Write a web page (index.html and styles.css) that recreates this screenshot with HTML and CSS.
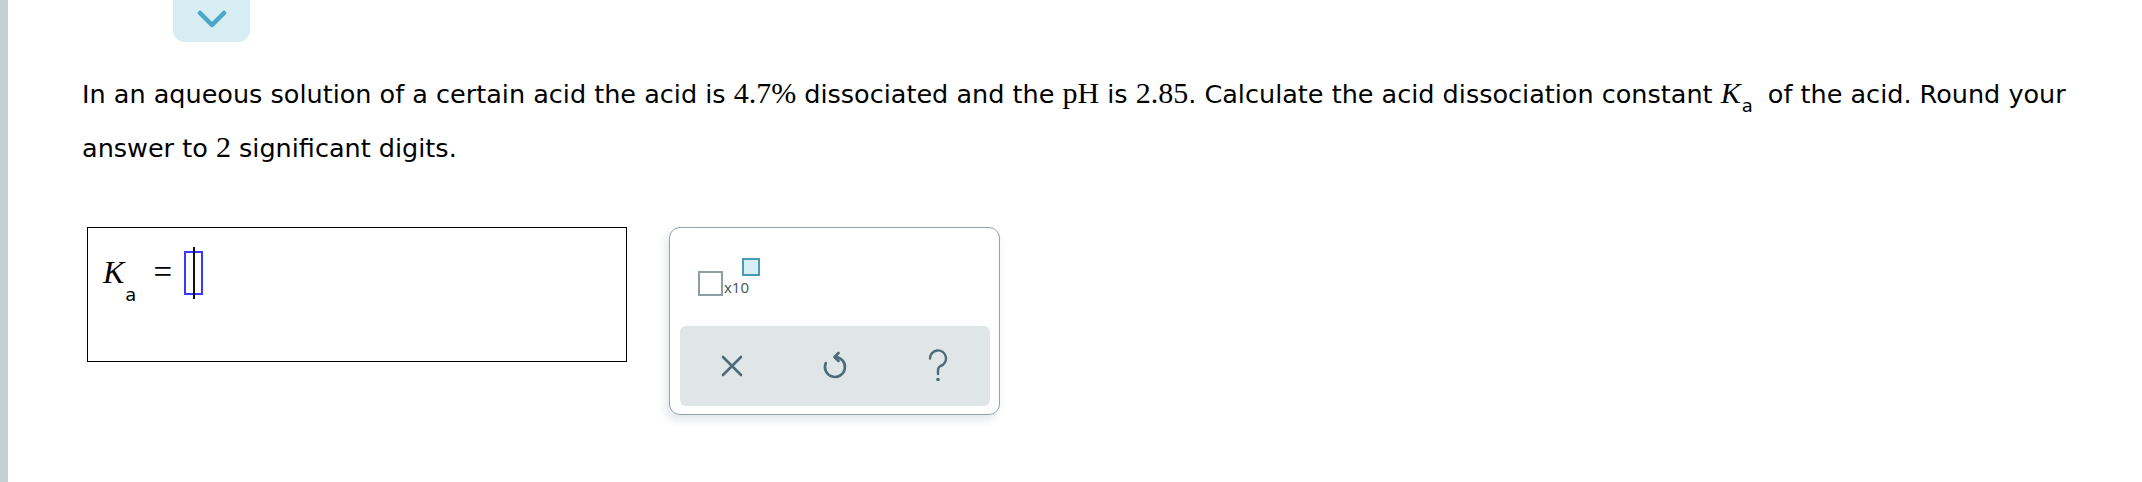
FILE: index.html
```html
<!DOCTYPE html>
<html lang="en">
<head>
  <meta charset="UTF-8">
  <title>Acid dissociation constant</title>
  <link rel="stylesheet" href="styles.css">
</head>
<body>
  <div class="edge"></div>
  <div class="page">
    <div class="tab-row">
      <button class="collapse" aria-label="Collapse">
        <svg width="30" height="18" viewBox="0 0 30 18"><path d="M3 3 L15 15 L27 3" fill="none" stroke="#4aa8c6" stroke-width="4.5" stroke-linecap="round" stroke-linejoin="round"/></svg>
      </button>
    </div>

    <p class="question">
      In an aqueous solution of a certain acid the acid is <span class="m">4.7%</span> dissociated and the <span class="m">pH</span> is <span class="m">2.85</span>. Calculate the acid dissociation constant <span class="m"><i>K</i></span><sub class="sub">a</sub> of the acid. Round your answer to <span class="m">2</span> significant digits.
    </p>

    <div class="answer-row">
      <div class="answer-box">
        <span class="m big"><i>K</i></span><sub class="sub sub-big">a</sub>
        <span class="eq">=</span>
        <span class="slot"><span class="caret"></span></span>
      </div>

      <div class="tools">
        <div class="tool-top">
          <button class="sci" aria-label="Scientific notation">
            <span class="sq"></span><span class="x10">x10</span><span class="sq-exp"></span>
          </button>
        </div>
        <div class="tool-bar">
          <button class="act" aria-label="Clear">
            <svg width="24" height="24" viewBox="0 0 24 24"><path d="M3 3 L21 21 M21 3 L3 21" stroke="#4b6b79" stroke-width="2.6" stroke-linecap="round"/></svg>
          </button>
          <button class="act" aria-label="Undo">
            <svg width="26" height="30" viewBox="0 0 26 30"><path d="M13 6 A10 10 0 1 1 3.8 12" fill="none" stroke="#4b6b79" stroke-width="2.6" stroke-linecap="round"/><path d="M16.5 2 L12.5 6 L16.5 10" fill="none" stroke="#4b6b79" stroke-width="2.6" stroke-linecap="round" stroke-linejoin="round"/></svg>
          </button>
          <button class="act" aria-label="Help">
            <svg width="22" height="34" viewBox="0 0 22 34"><path d="M3 9.5 A8 8 0 1 1 13.5 17 C11.5 18 11 19.5 11 21.5 V25" fill="none" stroke="#4b6b79" stroke-width="2.4" stroke-linecap="round"/><circle cx="11" cy="30.5" r="1.8" fill="#4b6b79"/></svg>
          </button>
        </div>
      </div>
    </div>
  </div>
</body>
</html>
```

FILE: styles.css
```css
* { box-sizing: border-box; margin: 0; padding: 0; }
html, body { height: 100%; }
body {
  font-family: 'DejaVu Sans', Verdana, sans-serif;
  background: #fff;
  color: #000;
  display: flex;
}
.edge {
  width: 8px;
  background: #c5d0d6;
  flex: none;
}
.page {
  flex: 1;
  padding: 0 20px 0 74px;
}
button {
  border: none;
  background: none;
  cursor: pointer;
  font-family: inherit;
}
.tab-row { height: 42px; padding-left: 91px; }
.collapse {
  width: 77px;
  height: 42px;
  background: #d6edf3;
  border-radius: 0 0 12px 12px;
  display: flex;
  align-items: center;
  justify-content: center;
  padding-bottom: 4px;
}
.question {
  font-size: 25.5px;
  line-height: 54px;
  margin-top: 25px;
}
.m {
  font-family: 'Liberation Serif', 'Times New Roman', serif;
  font-size: 30px;
  line-height: 0;
}
.m i { font-style: italic; }
.sub {
  font-size: 18px;
  line-height: 0;
  vertical-align: -9px;
  margin-left: 1px;
  margin-right: 7px;
}
.answer-row {
  display: flex;
  align-items: flex-start;
  gap: 42px;
  margin-top: 52px;
  padding-left: 5px;
}
.answer-box {
  width: 540px;
  height: 135px;
  border: 1px solid #000;
  display: flex;
  align-items: flex-start;
  padding: 24px 0 0 15px;
}
.big { font-size: 32px; line-height: 40px; }
.sub-big { font-size: 18px; line-height: 20px; vertical-align: baseline; margin-top: 33px; margin-right: 17px; }
.eq {
  font-family: 'Liberation Serif', serif;
  font-size: 33px;
  line-height: 40px;
  margin-right: 12px;
}
.slot {
  width: 19px;
  height: 44px;
  margin-top: -1px;
  border: 2px solid #3a3aff;
  display: flex;
  justify-content: center;
}
.caret {
  width: 2px;
  height: 52px;
  margin-top: -6px;
  background: #111;
  flex: none;
}
.tools {
  width: 331px;
  height: 188px;
  border: 1px solid #93a3ab;
  border-radius: 11px;
  background: #fff;
  box-shadow: -3px 5px 9px rgba(60, 80, 90, 0.14);
  padding: 0 9px 8px 10px;
  display: flex;
  flex-direction: column;
  justify-content: space-between;
}
.tool-top { padding: 30px 0 0 18px; }
.sci {
  position: relative;
  display: flex;
  align-items: flex-end;
  width: 64px;
  height: 38px;
  padding: 0;
}
.sq {
  width: 25px;
  height: 25px;
  border: 2.5px solid #8c9ea6;
}
.x10 {
  font-family: 'Open Sans', 'DejaVu Sans', sans-serif;
  font-size: 15px;
  color: #44535a;
  line-height: 15px;
  margin-left: 1px;
  margin-bottom: 1px;
}
.sq-exp {
  position: absolute;
  left: 44px;
  top: 0;
  width: 18px;
  height: 18px;
  border: 2.5px solid #4a9ab6;
  background: #d6edf3;
}
.tool-bar {
  height: 80px;
  background: #e0e5e8;
  border-radius: 6px;
  display: flex;
}
.act {
  flex: 1;
  display: flex;
  align-items: center;
  justify-content: center;
}
```
